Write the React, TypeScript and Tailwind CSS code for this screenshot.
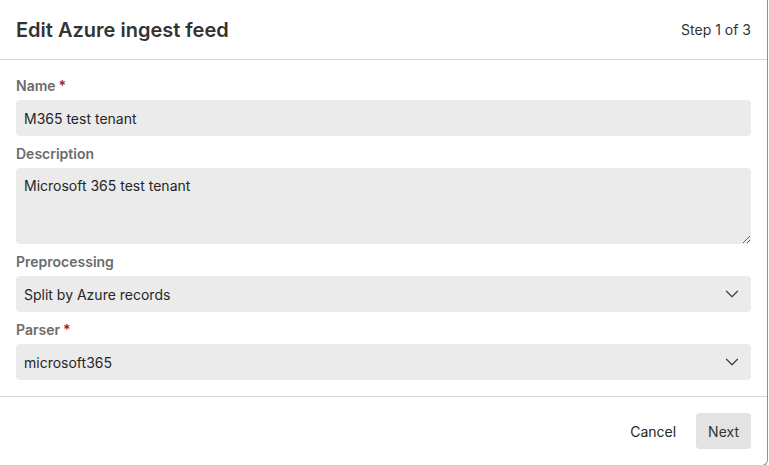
import React from "react";
import { ChevronDown } from "lucide-react";

function Label({ text, required }: { text: string; required?: boolean }) {
  return (
    <div className="h-5 mb-1 flex items-center text-[14px] font-semibold text-[#6b6b6b] leading-5">
      {text}
      {required && <span className="ml-[3px] text-[#a52020]">*</span>}
    </div>
  );
}

function Select({ value }: { value: string }) {
  return (
    <div className="h-9 w-full rounded-[4px] bg-[#ebebeb] flex items-center justify-between pl-2 pr-[8px] text-[14px] text-[#262626]">
      <span>{value}</span>
      <ChevronDown size={22} strokeWidth={1.4} className="text-[#444]" />
    </div>
  );
}

export default function App() {
  return (
    <div
      className="w-[768px] h-[466px] bg-white border-r border-b border-[#8f8f8f] rounded-br-[6px] flex flex-col overflow-hidden"
      style={{ fontFamily: "Inter, 'Noto Sans', sans-serif" }}
    >
      <div className="h-[60px] shrink-0 border-b border-[#d6d6d6] flex items-center justify-between pl-4 pr-4">
        <h1 className="text-[20px] font-semibold text-[#333]">Edit Azure ingest feed</h1>
        <span className="text-[14px] text-[#333]">Step 1 of 3</span>
      </div>
      <div className="px-4 pt-4 pb-4 flex flex-col gap-2 border-b border-[#d6d6d6]">
        <div>
          <Label text="Name" required />
          <input
            readOnly
            value="M365 test tenant"
            className="h-9 w-full rounded-[4px] bg-[#ebebeb] px-2 text-[14px] text-[#262626] outline-none"
          />
        </div>
        <div>
          <Label text="Description" />
          <textarea
            readOnly
            value="Microsoft 365 test tenant"
            className="block h-[76px] w-full rounded-[4px] bg-[#ebebeb] px-2 py-[7px] text-[14px] text-[#262626] outline-none resize-y"
          />
        </div>
        <div>
          <Label text="Preprocessing" />
          <Select value="Split by Azure records" />
        </div>
        <div>
          <Label text="Parser" required />
          <Select value="microsoft365" />
        </div>
      </div>
      <div className="flex justify-end items-center gap-2 pt-4 pr-4">
        <button className="h-9 px-3 text-[14px] text-[#262626] rounded-[4px]">Cancel</button>
        <button className="h-9 px-3 text-[14px] text-[#333] rounded-[4px] bg-[#e3e3e3]">Next</button>
      </div>
    </div>
  );
}
